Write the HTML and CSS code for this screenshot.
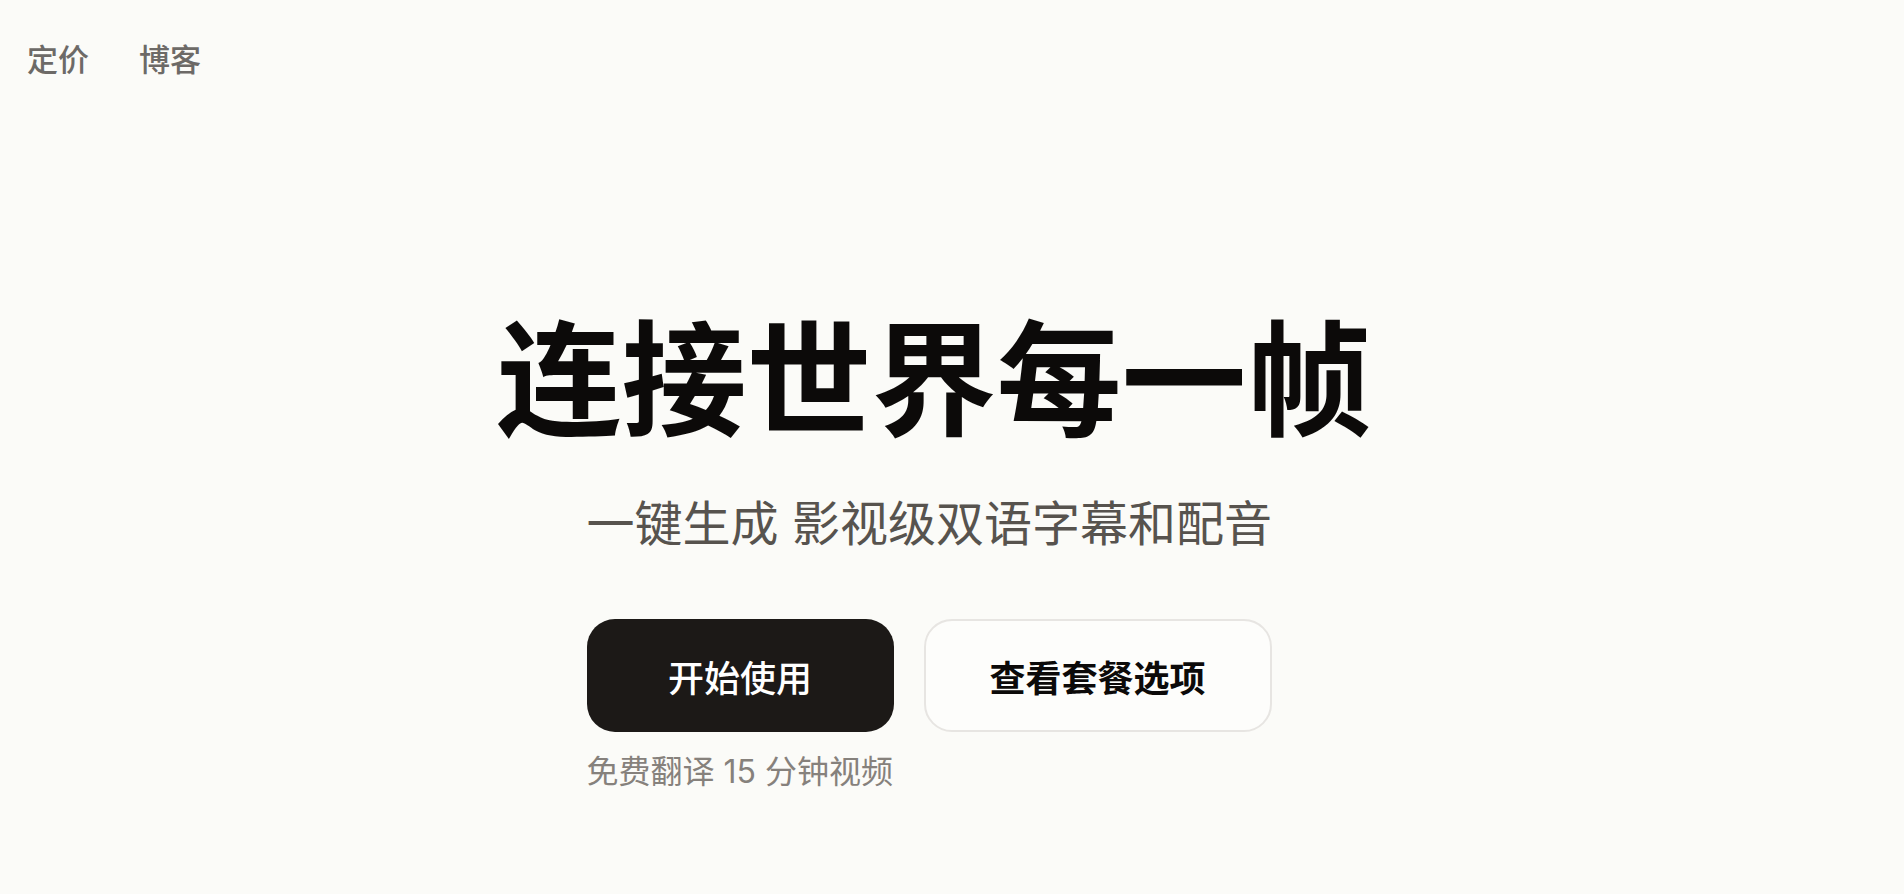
FILE: index.html
```html
<!DOCTYPE html>
<html lang="zh-CN">
<head>
<meta charset="utf-8">
<title>连接世界每一帧</title>
<link rel="stylesheet" href="styles.css">
</head>
<body>
<nav class="nav">
  <a class="nav-link" href="#">定价</a>
  <a class="nav-link" href="#">博客</a>
</nav>
<main class="hero">
  <div class="hero-inner">
    <h1 class="title">连接世界每一帧</h1>
    <p class="subtitle">一键生成 影视级双语字幕和配音</p>
    <div class="actions">
      <a class="btn btn-primary" href="#">开始使用</a>
      <a class="btn btn-secondary" href="#">查看套餐选项</a>
    </div>
    <p class="note">免费翻译 15 分钟视频</p>
  </div>
</main>
</body>
</html>
```
FILE: styles.css
```css
html, body {
  margin: 0;
  padding: 0;
}
body {
  background: #fbfbf8;
  font-family: "Inter", "Noto Sans CJK SC", sans-serif;
  width: 1904px;
  height: 894px;
  overflow: hidden;
}
.nav {
  display: flex;
  gap: 50px;
  padding: 45px 0 0 27px;
}
.nav-link {
  font-size: 31px;
  line-height: 30px;
  font-weight: 500;
  color: #6d6a67;
  text-decoration: none;
}
.hero {
  display: flex;
  justify-content: center;
  padding-right: 44px;
  padding-top: 243px;
}
.hero-inner {
  width: 687px;
  display: flex;
  flex-direction: column;
  align-items: flex-start;
}
.title {
  align-self: center;
  margin: 0 0 0 8px;
  font-size: 125px;
  line-height: 125px;
  font-weight: 700;
  color: #0c0a09;
  white-space: nowrap;
}
.subtitle {
  margin: 57px 0 0;
  font-size: 48px;
  line-height: 48px;
  font-weight: 400;
  color: #57534e;
  white-space: nowrap;
}
.actions {
  display: flex;
  gap: 30px;
  margin-top: 71px;
}
.btn {
  height: 113px;
  box-sizing: border-box;
  display: flex;
  align-items: center;
  justify-content: center;
  border-radius: 28px;
  font-size: 36px;
  text-decoration: none;
  white-space: nowrap;
}
.btn-primary {
  width: 307px;
  background: #1c1917;
  color: #ffffff;
  font-weight: 500;
}
.btn-secondary {
  width: 348px;
  background: #fdfdfb;
  border: 2px solid #e7e5e2;
  color: #0c0a09;
  font-weight: 700;
}
.note {
  margin: 24px 0 0;
  font-size: 32px;
  line-height: 32px;
  color: #86817c;
  white-space: nowrap;
}
```
